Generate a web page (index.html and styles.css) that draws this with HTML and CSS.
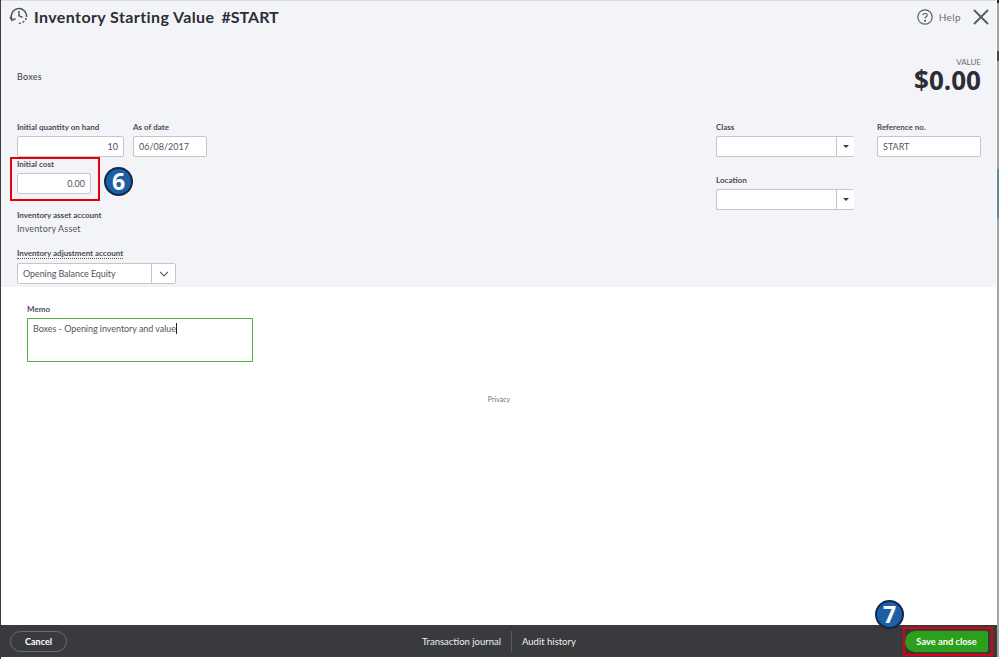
FILE: index.html
```html
<!DOCTYPE html>
<html lang="en">
<head>
<meta charset="utf-8">
<title>Inventory Starting Value</title>
<link rel="stylesheet" href="styles.css">
</head>
<body>
<div class="page">
<div class="window">
  <section class="panel">
    <header class="topbar">
      <div class="title-group">
        <svg class="history-icon" width="20" height="20" viewBox="0 0 20 20" fill="none" stroke="#4a4e55" stroke-width="1.4">
          <path d="M2.9 13.4 A7.7 7.7 0 1 1 17.6 11"/>
          <path d="M17.3 12 A7.7 7.7 0 0 1 8.5 17.2" stroke-dasharray="2 1.8"/>
          <path d="M.9 10.8 L2.9 14.4 L6.6 12.6"/>
          <path d="M10 5 V9.8 L13.6 11.4"/>
        </svg>
        <h1 class="title">Inventory Starting Value</h1>
        <span class="title title-ref">#START</span>
      </div>
      <div class="top-actions">
        <svg width="16" height="16" viewBox="0 0 17 17" fill="none" stroke="#555a60" stroke-width="1.2">
          <circle cx="8.5" cy="8.5" r="7.6"/>
          <path d="M6.3 6.6 C6.3 4.2 10.8 4.2 10.8 6.6 C10.8 8.3 8.5 8.2 8.5 10.2"/>
          <circle cx="8.5" cy="12.4" r=".5" fill="#555a60"/>
        </svg>
        <span class="help">Help</span>
        <svg class="close" width="16" height="16" viewBox="0 0 16 16" fill="none" stroke="#555a60" stroke-width="1.8">
          <path d="M1 1 L15 15 M15 1 L1 15"/>
        </svg>
      </div>
    </header>

    <div class="summary">
      <div class="item-name">Boxes</div>
      <div class="value">
        <div class="value-label">VALUE</div>
        <div class="value-amount">$0.00</div>
      </div>
    </div>

    <div class="form">
      <div class="form-left">
        <div class="row">
          <div class="field">
            <label class="label">Initial quantity on hand</label>
            <div class="input qty">10</div>
          </div>
          <div class="field">
            <label class="label">As of date</label>
            <div class="input date">06/08/2017</div>
          </div>
        </div>
        <div class="field cost-field">
          <label class="label">Initial cost</label>
          <div class="input cost">0.00</div>
          <span class="highlight cost-highlight"></span>
          <span class="badge cost-badge">6</span>
        </div>
        <div class="field asset-field">
          <label class="label">Inventory asset account</label>
          <div class="static">Inventory Asset</div>
        </div>
        <div class="field adjust-field">
          <label class="label dotted">Inventory adjustment account</label>
          <div class="combo adjust">
            <span class="combo-text">Opening Balance Equity</span>
            <span class="combo-btn">
              <svg width="10" height="6" viewBox="0 0 10 6" fill="none" stroke="#555a60" stroke-width="1.2"><path d="M1 .8 L5 4.8 L9 .8"/></svg>
            </span>
          </div>
        </div>
      </div>

      <div class="form-right">
        <div class="right-col">
          <div class="field">
            <label class="label">Class</label>
            <div class="combo small-combo"><span class="combo-text"></span><span class="combo-btn caret-btn"><i class="caret"></i></span></div>
          </div>
          <div class="field location-field">
            <label class="label">Location</label>
            <div class="combo small-combo"><span class="combo-text"></span><span class="combo-btn caret-btn"><i class="caret"></i></span></div>
          </div>
        </div>
        <div class="field">
          <label class="label">Reference no.</label>
          <div class="input ref">START</div>
        </div>
      </div>
    </div>
  </section>

  <main class="body">
    <label class="label memo-label">Memo</label>
    <div class="memo">Boxes - Opening inventory and value<span class="cursor"></span></div>
    <div class="privacy">Privacy</div>
  </main>

  <footer class="footer">
    <button class="cancel">Cancel</button>
    <nav class="footer-links">
      <span>Transaction journal</span>
      <i class="divider"></i>
      <span>Audit history</span>
    </nav>
    <div class="save-wrap">
      <button class="save">Save and close</button>
      <span class="highlight save-highlight"></span>
      <span class="badge save-badge">7</span>
    </div>
  </footer>
</div>
<div class="edge">
  <i class="edge-black"></i>
  <i class="edge-grey edge-a"></i>
  <i class="edge-dark"></i>
  <i class="edge-grey edge-b"></i>
  <i class="edge-teal"></i>
  <i class="edge-grey edge-c"></i>
</div>
</div>
</body>
</html>
```

FILE: styles.css
```css
* { box-sizing: border-box; }
html, body { margin: 0; height: 659px; overflow: hidden; background: #fff; }
body {
  font-family: "Lato", "Open Sans", sans-serif;
  color: #393a3d;
  border-left: 1px solid #3a3c40;
}
.page { display: flex; width: 998px; height: 657px; }
.window { width: 996px; height: 657px; display: flex; flex-direction: column; flex: none; }

.edge { width: 2px; height: 657px; display: flex; flex-direction: column; flex: none; }
.edge i { display: block; flex: none; }
.edge-black { height: 3px; background: #222; }
.edge-grey { background: #a4a4a4; }
.edge-a { height: 48px; }
.edge-dark { height: 10px; background: #4a4a4a; }
.edge-b { height: 108px; }
.edge-teal { height: 50px; background: #5f8a96; }
.edge-c { height: 438px; }

.panel {
  height: 287px;
  flex: none;
  background: #f3f4f8;
  border-top: 1px solid #d8dade;
  margin-right: 1px;
  padding: 0 15px 0 16px;
}
.topbar { display: flex; justify-content: space-between; height: 31px; align-items: center; }
.title-group { display: flex; align-items: center; margin-left: -8px; }
.history-icon { margin-right: 5px; margin-top: -1px; }
.title { margin: 0; font-size: 16px; font-weight: 700; color: #2c2e33; line-height: 22px; letter-spacing: .4px; }
.title-ref { margin-left: 7px; letter-spacing: 0; }
.top-actions { display: flex; align-items: center; margin-right: -8px; }
.help { font-size: 10px; color: #6b6c72; margin-left: 6px; letter-spacing: .4px; }
.close { margin-left: 12px; }

.summary { display: flex; justify-content: space-between; height: 92px; }
.item-name { font-size: 9px; margin-top: 39px; color: #393a3d; letter-spacing: .25px; }
.value { text-align: right; margin-top: 26px; }
.value-label { font-size: 8px; line-height: 8px; color: #6b6c72; }
.value-amount { font-size: 26px; line-height: 28px; font-weight: 700; color: #2c2e33; font-family: "Open Sans", sans-serif; }

.form { display: flex; justify-content: space-between; }
.form-left { display: flex; flex-direction: column; }
.form-right { display: flex; gap: 23px; }
.row { display: flex; gap: 9px; }
.field { display: flex; flex-direction: column; position: relative; }
.label { font-size: 8px; line-height: 7px; font-weight: 700; color: #4b4c52; height: 12px; }
.input {
  height: 21px;
  background: #fff;
  border: 1px solid #c4c6cc;
  border-radius: 2px;
  font-size: 9px;
  line-height: 19px;
  padding: 0 5px;
  color: #55565b;
}
.qty { width: 107px; text-align: right; }
.date { width: 74px; }
.cost { width: 74px; text-align: right; }
.ref { width: 104px; }
.cost-field { margin-top: 4px; width: 74px; }
.asset-field { margin-top: 18px; }
.static { font-size: 9px; line-height: 14px; margin-top: -2px; color: #55565b; letter-spacing: .15px; }
.adjust-field { margin-top: 14px; }
.dotted { border-bottom: 1px dotted #55565b; align-self: flex-start; height: 9px; margin-bottom: 4px; }

.combo { display: flex; height: 21px; background: #fff; border: 1px solid #c4c6cc; border-radius: 2px; font-size: 9px; color: #55565b; }
.combo-text { flex: 1; line-height: 19px; padding: 0 5px; letter-spacing: -.08px; }
.combo-btn { width: 24px; border-left: 1px solid #c4c6cc; display: flex; align-items: center; justify-content: center; }
.adjust { width: 159px; }
.small-combo { width: 138px; border-right: 0; }
.caret-btn { width: 18px; }
.caret { width: 0; height: 0; border-left: 3px solid transparent; border-right: 3px solid transparent; border-top: 3px solid #393a3d; }
.location-field { margin-top: 20px; }

.body { flex: 1; padding: 17px 26px 0; display: flex; flex-direction: column; }
.memo-label { line-height: 10px; height: 12px; }
.memo {
  width: 226px;
  height: 44px;
  border: 1px solid #4fb53f;
  font-size: 9px;
  line-height: 13px;
  padding: 3px 5px;
  color: #55565b;
  flex: none;
  margin-top: 2px;
  letter-spacing: -.05px;
}
.cursor { display: inline-block; width: 1px; height: 11px; background: #222; vertical-align: -2px; }
.privacy { align-self: center; margin-top: 31px; font-size: 7px; line-height: 12px; color: #8a6a5a; }

.footer {
  flex: none;
  height: 32px;
  background: #393a3d;
  display: flex;
  align-items: center;
  padding: 0 9px 0 9px;
}
.cancel {
  width: 57px; height: 21px;
  background: transparent;
  border: 1px solid #6b6c72;
  border-radius: 11px;
  color: #fff;
  font: 700 9px "Lato", sans-serif;
  padding: 0;
}
.footer-links {
  display: flex; align-items: center;
  gap: 10px;
  color: #f0f0f0;
  font-size: 9.5px;
  margin-left: 355px;
}
.divider { width: 1px; height: 21px; background: #5a5b60; }
.save-wrap { margin-left: auto; position: relative; }
.save {
  display: block;
  width: 83px; height: 21px;
  background: #2ca01c;
  border: 0;
  border-radius: 11px 2px 2px 11px;
  color: #fff;
  font: 700 9.3px "Lato", sans-serif;
  padding: 0;
}
.highlight { position: absolute; border: 2px solid #e2000f; pointer-events: none; }
.cost-highlight { left: -7px; top: -4px; width: 90px; height: 44px; }
.save-highlight { left: -2px; top: -4px; width: 90px; height: 29px; }
.badge {
  position: absolute;
  width: 29px; height: 29px;
  border-radius: 50%;
  background: #1c5fa5;
  border: 2px solid #12294a;
  color: #fff;
  font: 700 23px/25px "Open Sans", sans-serif;
  text-align: center;
}
.cost-badge { left: 87px; top: 6px; }
.save-badge { left: -30px; top: -31px; }
```
